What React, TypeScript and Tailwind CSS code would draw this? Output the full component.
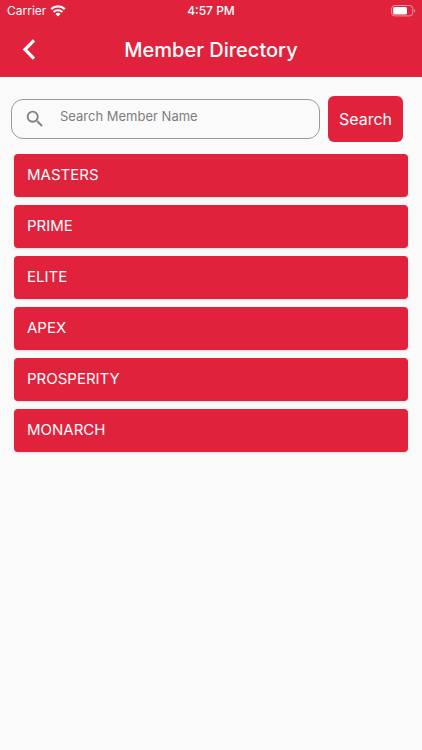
import React from 'react';

const groups: string[] = ['MASTERS', 'PRIME', 'ELITE', 'APEX', 'PROSPERITY', 'MONARCH'];

function WifiIcon() {
  return (
    <svg viewBox="0 0 16 12" className="h-3 w-4" fill="none" stroke="white" aria-hidden="true">
      <path d="M1.2 4.2a9.8 9.8 0 0 1 13.6 0" strokeWidth="2.3" />
      <path d="M3.6 7a6.3 6.3 0 0 1 8.8 0" strokeWidth="2.1" />
      <path d="M8 11.6 5.5 9.1a3.5 3.5 0 0 1 5 0z" fill="white" stroke="none" />
    </svg>
  );
}

function BatteryIcon() {
  return (
    <svg viewBox="0 0 25 12" className="h-3 w-[25px]" fill="none" aria-hidden="true">
      <rect x="1.7" y="0.5" width="21" height="10.4" rx="3" stroke="white" strokeOpacity="0.5" />
      <rect x="3.2" y="1.9" width="13.8" height="7.6" rx="1.5" fill="white" />
      <path d="M23.9 4.1c1.3.5 1.3 2.9 0 3.4z" fill="white" fillOpacity="0.6" />
    </svg>
  );
}

function StatusBar() {
  return (
    <div className="grid h-[22px] grid-cols-3 items-center px-[7px] text-xs">
      <div className="flex items-center gap-1">
        <span>Carrier</span>
        <WifiIcon />
      </div>
      <span className="text-center font-medium">4:57 PM</span>
      <div className="flex justify-end">
        <BatteryIcon />
      </div>
    </div>
  );
}

export default function App() {
  return (
    <div className="min-h-screen bg-[#fafafa] font-['Inter',sans-serif]">
      <header className="bg-[#e0223c] text-white">
        <StatusBar />
        <div className="grid h-[55px] grid-cols-[58px_1fr_58px] items-center">
          <button type="button" aria-label="Back" className="flex h-full items-center justify-center">
            <svg viewBox="0 0 14 22" className="h-[22px] w-3.5" fill="none" stroke="white" strokeWidth="3.2" aria-hidden="true">
              <path d="M12 1.4 3 10.5l9 9.1" />
            </svg>
          </button>
          <h1 className="text-center text-xl leading-6 font-medium">Member Directory</h1>
        </div>
      </header>
      <main className="px-3.5 pt-[19px]">
        <form className="-ml-[3px] mr-[5px] flex items-center gap-2" onSubmit={(e) => e.preventDefault()}>
          <div className="flex h-10 min-w-0 flex-1 items-center rounded-xl border border-[#999999] pl-3">
            <svg viewBox="0 0 24 24" className="size-[22px] shrink-0" fill="#808080" aria-hidden="true">
              <path d="M15.5 14h-.79l-.28-.27A6.47 6.47 0 0 0 16 9.5 6.5 6.5 0 1 0 9.5 16c1.61 0 3.09-.59 4.23-1.57l.27.28v.79l5 4.99L20.49 19l-4.99-5zm-6 0C7.01 14 5 11.99 5 9.5S7.01 5 9.5 5 14 7.01 14 9.5 11.99 14 9.5 14z" />
            </svg>
            <input
              type="text"
              aria-label="Search Member Name"
              placeholder="Search Member Name"
              className="h-full min-w-0 flex-1 bg-transparent pb-1.5 pl-3.5 text-[13px] text-[#333333] outline-none placeholder:text-[#7d7d7d]"
            />
          </div>
          <button type="submit" className="h-[46px] w-[75px] rounded-md bg-[#e0223c] text-base text-white">
            Search
          </button>
        </form>
        <ul className="mt-3 flex flex-col gap-2">
          {groups.map((name) => (
            <li key={name}>
              <button
                type="button"
                className="block h-[43px] w-full rounded bg-[#e0223c] px-[13px] text-left text-[15px] text-white shadow-sm"
              >
                {name}
              </button>
            </li>
          ))}
        </ul>
      </main>
    </div>
  );
}
